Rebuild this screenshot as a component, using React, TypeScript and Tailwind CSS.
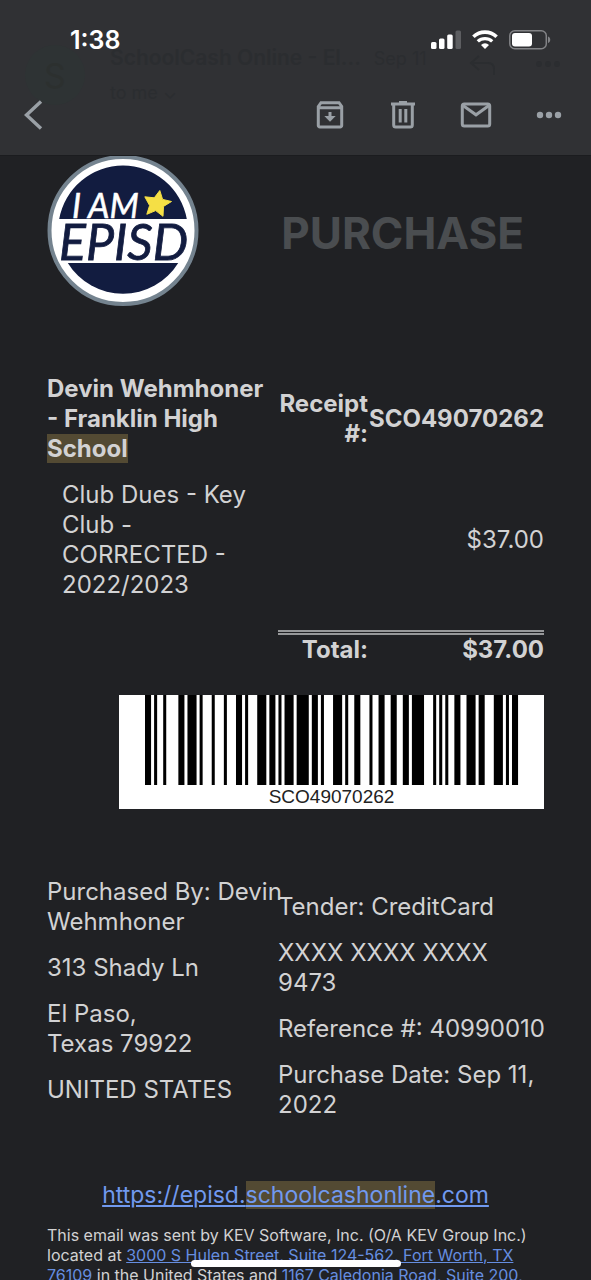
import type { ReactNode } from "react";

// Code 128 widths, alternating bar and space
const barcodeWidths =
  "211214" + "213113" + "131321" + "133121" + "113141" + "211331" + "122312" + "222221" + "431111" + "122231" + "2331112";

const purchaser = [["Purchased By: Devin", "Wehmhoner"], ["313 Shady Ln"], ["El Paso,", "Texas 79922"], ["UNITED STATES"]];

const payment = [["Tender: CreditCard"], ["XXXX XXXX XXXX", "9473"], ["Reference #: 40990010"], ["Purchase Date: Sep 11,", "2022"]];

function StatusBar() {
  return (
    <div className="flex h-[74px] items-center justify-between pt-1.5 pr-10 pl-[70px]">
      <span className="text-[25px] leading-8 font-semibold text-white">1:38</span>
      <div className="flex items-center gap-[11px]">
        <svg className="h-5 w-[30px]" viewBox="0 0 30 20" fill="#fff" aria-label="Signal">
          <rect x="0" y="12" width="5.5" height="7" rx="1.5" />
          <rect x="8" y="8.5" width="5.5" height="10.5" rx="1.5" />
          <rect x="16.2" y="4.5" width="5.5" height="14.5" rx="1.5" />
          <rect x="24.5" y="0.5" width="5.5" height="18.5" rx="1.5" fill="#5d5e61" />
        </svg>
        <svg className="h-5 w-[26px]" viewBox="0 0 26 20" fill="none" stroke="#fff" aria-label="Wi-Fi">
          <path d="M1.4 6.8a16.8 16.8 0 0 1 23.2 0" strokeWidth="3.6" />
          <path d="M5.8 11.4a10.6 10.6 0 0 1 14.4 0" strokeWidth="3.3" />
          <path d="M13 19l-4-4.1a6 6 0 0 1 8 0z" fill="#fff" stroke="none" />
        </svg>
        <svg className="h-5 w-[42px]" viewBox="0 0 42 20" aria-label="Battery">
          <rect x="0.8" y="0.8" width="36.5" height="18" rx="5" fill="none" stroke="#828386" strokeWidth="1.5" />
          <rect x="3" y="3" width="20" height="13.6" rx="3" fill="#fff" />
          <path d="M39 6.5c3 1 3 5.500 0 6.500z" fill="#828386" />
        </svg>
      </div>
    </div>
  );
}

function ToolButton({ label, children }: { label: string; children: ReactNode }) {
  return (
    <button type="button" aria-label={label} className="grid h-10 w-8 place-items-center text-[#9aa0a6]">
      <svg className="size-8" viewBox="0 0 32 32" fill="none" stroke="currentColor" strokeWidth="3">
        {children}
      </svg>
    </button>
  );
}

function Toolbar() {
  return (
    <nav className="flex h-[81px] items-center justify-between pr-[26px] pl-[17px]">
      <ToolButton label="Back">
        <path d="M24 2.500L9.500 16L24 29.500" strokeWidth="3.400" />
      </ToolButton>
      <div className="flex gap-[41px]">
        <ToolButton label="Archive">
          <path d="M4.300 7.500L7 3.700H25L27.700 7.500V26.500a1.500 1.500 0 0 1-1.500 1.500H5.800a1.500 1.500 0 0 1-1.500-1.500zM4.300 8.800H27.700" />
          <path d="M16 13v7" />
          <path d="M10.300 17h11.400L16 22.800z" fill="currentColor" stroke="none" />
        </ToolButton>
        <ToolButton label="Delete">
          <path d="M4 5h24" />
          <path d="M12 3.500h8" />
          <path d="M6.700 6v20a2 2 0 0 0 2 2h14.600a2 2 0 0 0 2-2V6M13.200 10v13.500M18.800 10v13.500" />
        </ToolButton>
        <ToolButton label="Mark as unread">
          <rect x="2.300" y="5" width="27.400" height="22" rx="2" />
          <path d="M3 6.500L16 15.800L29 6.500" />
        </ToolButton>
        <ToolButton label="More">
          <g fill="currentColor" stroke="none">
            <circle cx="7" cy="16" r="3.200" />
            <circle cx="16" cy="16" r="3.200" />
            <circle cx="25" cy="16" r="3.200" />
          </g>
        </ToolButton>
      </div>
    </nav>
  );
}

// Message header that shows faintly through the toolbar
function SenderGhost() {
  return (
    <div className="absolute inset-x-0 top-[45px] flex pr-[30px] pl-[25px] text-[#2b2d30]">
      <span className="grid size-[60px] place-items-center rounded-full bg-[#2e3334] text-[34px] text-[#2c302f]">S</span>
      <div className="ml-[25px]">
        <p className="text-[21px] leading-6 font-semibold">
          SchoolCash Online - El... <span className="ml-2 text-lg font-normal">Sep 11</span>
        </p>
        <p className="mt-2 text-lg leading-6">to me ⌄</p>
      </div>
      <svg className="mt-2 ml-auto h-6 w-[92px]" viewBox="0 0 92 24" fill="none" stroke="currentColor" strokeWidth="2">
        <path d="M10 3L2 10l8 7M2 10h17q6 0 6 6v6" />
        <g fill="currentColor" stroke="none">
          <circle cx="70" cy="11" r="3" />
          <circle cx="79" cy="11" r="3" />
          <circle cx="88" cy="11" r="3" />
        </g>
      </svg>
    </div>
  );
}

function Logo() {
  return (
    <svg className="h-[150px] w-[152px] shrink-0" viewBox="0 0 152 150" aria-label="I am EPISD">
      <circle cx="76" cy="74.500" r="73.500" fill="#fff" stroke="#74838f" strokeWidth="4" />
      <path d="M12.200 63a64.800 64.800 0 0 1 127.600 0z" fill="#121c40" />
      <path d="M20.800 107a64.800 64.800 0 0 0 110.400 0z" fill="#121c40" />
      <text x="25" y="62" fill="#fff" stroke="#fff" strokeWidth="0.500" className="font-['Lato',sans-serif] text-[34px] italic">
        I AM
      </text>
      <text x="12" y="104" fill="#121c40" stroke="#121c40" strokeWidth="0.800" className="font-['Lato',sans-serif] text-[50px] italic">
        EPISD
      </text>
      <path
        d="M112.800 34.500L115.600 43.400L124.500 45.500L116.500 50.400L116 60.300L108.700 54.600L99.800 58.300L102.600 49.500L97.800 40.800L107.300 41.800z"
        fill="#f5df45"
        stroke="#f5df45"
        strokeLinejoin="round"
      />
    </svg>
  );
}

function Barcode() {
  let x = 26;
  const bars = barcodeWidths.split("").map((digit, index) => {
    const width = Number(digit) * 3.033;
    const bar = index % 2 === 0 ? <rect key={index} x={x} y="0" width={width} height="90" /> : null;
    x += width;
    return bar;
  });

  return (
    <figure className="ml-auto w-[425px] max-w-full bg-white text-[#222]">
      <svg className="w-full" viewBox="0 0 425 90" fill="#000" aria-hidden="true">
        {bars}
      </svg>
      <figcaption className="text-center font-['Liberation_Sans',sans-serif] text-[19px] leading-6">SCO49070262</figcaption>
    </figure>
  );
}

function Details({ items }: { items: string[][] }) {
  return (
    <div className="space-y-4">
      {items.map((lines) => (
        <p key={lines[0]}>
          {lines.map((line) => (
            <span key={line} className="block whitespace-nowrap">
              {line}
            </span>
          ))}
        </p>
      ))}
    </div>
  );
}

function Mark({ children }: { children: ReactNode }) {
  return <mark className="bg-[#534a33] text-inherit">{children}</mark>;
}

export default function App() {
  return (
    <div className="relative h-screen overflow-hidden bg-[#202124] font-['Inter',sans-serif] text-[#d2d2d3]">
      <header className="relative border-b border-[#1b1c1f] bg-[#303134]">
        <SenderGhost />
        <div className="relative">
          <StatusBar />
          <Toolbar />
        </div>
      </header>

      <main className="px-[47px] text-2xl leading-[30px]">
        <div className="flex items-center justify-between pr-5">
          <Logo />
          <h1 className="pt-1 text-[44px] leading-[52px] font-bold text-[#4a4d50]">PURCHASE</h1>
        </div>

        <table className="mt-[68px] w-full table-fixed">
          <colgroup>
            <col />
            <col className="w-[90px]" />
            <col className="w-[176px]" />
          </colgroup>
          <tbody>
            <tr className="text-right font-bold">
              <th className="text-left">
                Devin Wehmhoner
                <br />- Franklin High
                <br />
                <Mark>School</Mark>
              </th>
              <td>
                Receipt
                <br />
                #:
              </td>
              <td>SCO49070262</td>
            </tr>
            <tr>
              <td className="pt-4 pl-[15px]">
                Club Dues - Key
                <br />
                Club -
                <br />
                CORRECTED -
                <br />
                2022/2023
              </td>
              <td />
              <td className="pt-4 text-right">$37.00</td>
            </tr>
            <tr aria-hidden="true">
              <td className="h-8" colSpan={3} />
            </tr>
            <tr className="text-right font-bold">
              <td />
              <td className="border-t-[5px] border-double border-[#97989a]">Total:</td>
              <td className="border-t-[5px] border-double border-[#97989a]">$37.00</td>
            </tr>
          </tbody>
        </table>

        <div className="mt-[30px]">
          <Barcode />
        </div>

        <div className="mt-[68px] flex">
          <div className="min-w-0 flex-1">
            <Details items={purchaser} />
          </div>
          <div className="w-[266px] pt-[15px]">
            <Details items={payment} />
          </div>
        </div>

        <p className="mt-[60px] text-center text-[23px]">
          <a href="https://episd.schoolcashonline.com" className="text-[#7199ef] underline">
            https://episd.<Mark>schoolcashonline</Mark>.com
          </a>
        </p>

        <footer className="mt-[15px] text-base leading-5 whitespace-nowrap">
          This email was sent by KEV Software, Inc. (O/A KEV Group Inc.)
          <br />
          located at{" "}
          <a href="#hulen" className="text-[#668ee0] underline">
            3000 S Hulen Street, Suite 124-562, Fort Worth, TX
            <br />
            76109
          </a>{" "}
          in the United States and{" "}
          <a href="#caledonia" className="text-[#668ee0] underline">
            1167 Caledonia Road, Suite 200,
          </a>
        </footer>
      </main>

      <div className="absolute bottom-[13px] left-1/2 h-[7px] w-[210px] -translate-x-1/2 rounded-full bg-white" />
    </div>
  );
}
